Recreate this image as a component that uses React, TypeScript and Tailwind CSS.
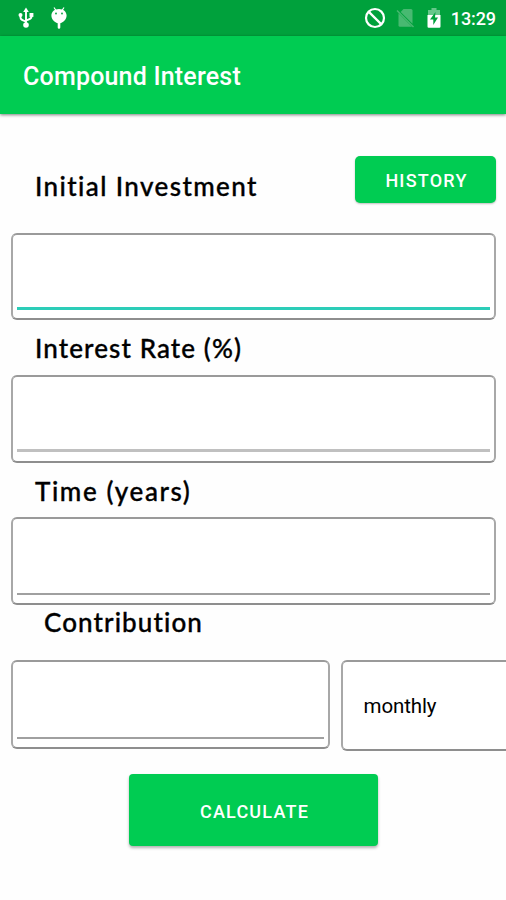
import React from 'react';

interface FieldProps {
  id: string;
  label: string;
  className: string;
  lineClassName: string;
}

function Field({ id, label, className, lineClassName }: FieldProps) {
  return (
    <div
      className={`flex flex-col justify-end rounded-md border-2 border-x-[#a8a8a8] border-t-[#9a9a9a] border-b-[#8e8e8e] bg-white px-1 ${className}`}
    >
      <input
        id={id}
        aria-label={label}
        className={`h-14 w-full bg-transparent px-2 font-['Roboto',sans-serif] text-xl outline-none ${lineClassName}`}
      />
    </div>
  );
}

function UsbIcon() {
  return (
    <svg className="h-[22px] w-[16px]" viewBox="0 0 16 22" fill="none" stroke="white" strokeWidth="1.9">
      <path d="M8 4v14M2.5 8v2.5c0 2 1.5 2.5 5.5 4M13.500 8v1.500c0 2-1.500 2.500-5.500 4" />
      <path d="M8 0.500l2.800 4.500H5.200z" fill="white" stroke="none" />
      <circle cx="2.500" cy="8" r="2" fill="white" stroke="none" />
      <path d="M11.500 6h3.900v3.900h-3.900z" fill="white" stroke="none" />
      <circle cx="8" cy="18" r="2.800" fill="white" stroke="none" />
    </svg>
  );
}

function DebugIcon() {
  return (
    <svg className="h-[22px] w-[18px]" viewBox="0 0 18 22">
      <path d="M4 0.500l2 3M14 0.500l-2 3" stroke="white" strokeWidth="1.200" />
      <path
        d="M9 2c4.400 0 7.600 2.800 7.600 6.600 0 3.700-2.700 6.400-6.300 7.700v4.100a1.300 1.300 0 0 1-2.600 0v-4.100C4.100 15 1.400 12.300 1.400 8.600 1.400 4.800 4.600 2 9 2z"
        fill="white"
      />
      <circle cx="6" cy="6.500" r="0.900" fill="#00a13c" />
      <circle cx="12" cy="6.500" r="0.900" fill="#00a13c" />
    </svg>
  );
}

function BlockedIcon() {
  return (
    <svg className="h-[22px] w-[22px]" viewBox="0 0 22 22" fill="none" stroke="white" strokeWidth="2.200">
      <circle cx="11" cy="11" r="9" />
      <path d="M4.600 4.600l12.800 12.800" />
    </svg>
  );
}

function NoSimIcon() {
  return (
    <svg className="h-[22px] w-[19px]" viewBox="0 0 19 22">
      <path d="M7.500 2H15a1.500 1.500 0 0 1 1.500 1.500v13.200L4.700 4.900z" fill="#48b971" />
      <path d="M2.500 6.200l13.500 13.600H4A1.500 1.500 0 0 1 2.500 18.300z" fill="#48b971" />
      <path d="M1 3.500l16.500 16.500" stroke="#48b971" strokeWidth="1.400" />
    </svg>
  );
}

function BatteryIcon() {
  return (
    <svg className="h-[22px] w-[14px]" viewBox="0 0 14 22">
      <path d="M4.500 1h5v2H13v6H1V3h3.500z" fill="#66c78a" />
      <path d="M0.500 8h13v11.500a1.200 1.200 0 0 1-1.200 1.200H1.700a1.200 1.200 0 0 1-1.200-1.200z" fill="white" />
      <path d="M8.500 5L3 12.500h3.300V18L11 10.500H8z" fill="#00a13c" />
    </svg>
  );
}

function StatusBar() {
  return (
    <div className="flex h-9 items-center bg-[#00a13c] pr-[10px] pl-[18px]">
      <UsbIcon />
      <div className="ml-4">
        <DebugIcon />
      </div>
      <div className="ml-auto flex items-center">
        <BlockedIcon />
        <div className="ml-[10px]">
          <NoSimIcon />
        </div>
        <div className="ml-3">
          <BatteryIcon />
        </div>
        <span className="mt-[2px] ml-[10px] text-lg leading-none font-medium tracking-[-0.1px] text-white">13:29</span>
      </div>
    </div>
  );
}

const labelFont =
  "font-['Lato','Open_Sans',sans-serif] text-[26px] leading-8 font-medium text-black whitespace-nowrap [-webkit-text-stroke:0.35px_black]";

export default function App() {
  return (
    <div className="flex h-[900px] w-[506px] flex-col overflow-hidden bg-[#fefefe] font-['Roboto',sans-serif]">
      <StatusBar />
      <header className="flex h-[78px] shrink-0 items-center bg-[#00cc52] pt-[2px] pl-[23px] shadow-[0_1px_3px_rgba(0,0,0,0.5)]">
        <h1 className="text-[25px] leading-none font-medium tracking-[0.2px] text-white">Compound Interest</h1>
      </header>

      <main className="flex flex-col pl-[11px]">
        <div className="mt-[42px] flex h-[47px] items-start justify-between pr-[10px] pl-6">
          <label htmlFor="initial" className={`mt-[14px] tracking-[1.4px] ${labelFont}`}>
            Initial Investment
          </label>
          <button className="h-[47px] w-[141px] rounded-[5px] bg-[#00cc52] pt-[2px] pl-[2px] text-lg font-medium tracking-[1.2px] text-white shadow-[0_1px_2px_rgba(0,0,0,0.25)]">
            HISTORY
          </button>
        </div>
        <Field
          id="initial"
          label="Initial Investment"
          className="mt-[30px] mr-[10px] h-[87px] pb-[8px]"
          lineClassName="border-b-3 border-[#2ccdb8]"
        />

        <label htmlFor="rate" className={`mt-[12px] ml-6 tracking-[1.1px] ${labelFont}`}>
          Interest Rate (%)
        </label>
        <Field
          id="rate"
          label="Interest Rate"
          className="mt-[11px] mr-[10px] h-[88px] pb-[9px]"
          lineClassName="border-b-3 border-[#c0c0c0]"
        />

        <label htmlFor="time" className={`mt-[12px] ml-6 tracking-[1.6px] ${labelFont}`}>
          Time (years)
        </label>
        <Field
          id="time"
          label="Time"
          className="mt-[10px] mr-[10px] h-[88px] pb-[8px]"
          lineClassName="border-b-2 border-[#a0a0a0]"
        />

        <label htmlFor="contribution" className={`mt-[1px] ml-[33px] tracking-[1.1px] ${labelFont}`}>
          Contribution
        </label>
        <div className="mt-[22px] flex items-start gap-[11px]">
          <Field
            id="contribution"
            label="Contribution"
            className="h-[89px] w-[319px] shrink-0 pb-[8px]"
            lineClassName="border-b-2 border-[#a0a0a0]"
          />
          <button className="flex h-[91px] w-[200px] shrink-0 items-center rounded-md border-2 border-x-[#a8a8a8] border-t-[#9a9a9a] border-b-[#8e8e8e] bg-white pt-[2px] pl-[20.500px] text-[20.5px] tracking-[-0.1px] text-black">
            monthly
          </button>
        </div>
      </main>

      <button className="mt-[23px] ml-[129px] h-[72px] w-[249px] rounded-[4px] bg-[#00cc52] pt-[3px] pl-[2px] text-lg font-medium tracking-[1.2px] text-white shadow-[0_2px_3px_rgba(0,0,0,0.3)]">
        CALCULATE
      </button>
    </div>
  );
}
